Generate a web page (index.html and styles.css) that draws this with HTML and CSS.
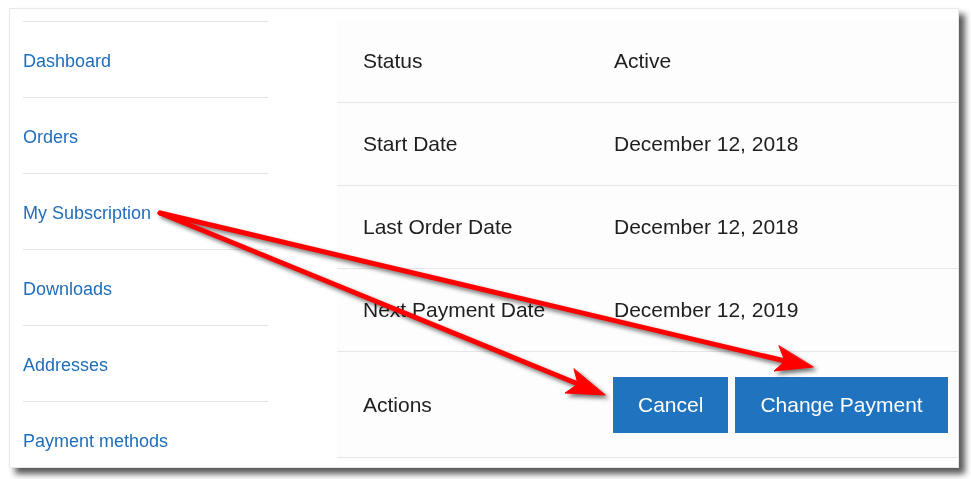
FILE: index.html
```html
<!DOCTYPE html>
<html lang="en">
<head>
  <meta charset="UTF-8" />
  <meta name="viewport" content="width=device-width, initial-scale=1.0"/>
  <title>My Subscription</title>
  <link rel="stylesheet" href="styles.css">
</head>
<body>
  <div class="shot">
    <div class="frame">
      <ul class="account-nav">
        <li><a href="#">Dashboard</a></li>
        <li><a href="#">Orders</a></li>
        <li><a href="#">My Subscription</a></li>
        <li><a href="#">Downloads</a></li>
        <li><a href="#">Addresses</a></li>
        <li><a href="#">Payment methods</a></li>
      </ul>

      <div class="subscription">
        <div class="row">
          <div class="label">Status</div>
          <div class="value">Active</div>
        </div>
        <div class="row">
          <div class="label">Start Date</div>
          <div class="value">December 12, 2018</div>
        </div>
        <div class="row">
          <div class="label">Last Order Date</div>
          <div class="value">December 12, 2018</div>
        </div>
        <div class="row">
          <div class="label">Next Payment Date</div>
          <div class="value">December 12, 2019</div>
        </div>
        <div class="row actions">
          <div class="label">Actions</div>
          <div class="value">
            <a href="#" class="button">Cancel</a>
            <a href="#" class="button">Change Payment</a>
          </div>
        </div>
      </div>
    </div>
  </div>

  <!-- annotation arrows drawn over the screenshot -->
  <svg class="arrows" width="971" height="479" viewBox="0 0 971 479">
    <g fill="#ff0000" stroke="#ff0000" stroke-linecap="round" stroke-linejoin="round">
      <line x1="160" y1="213" x2="578" y2="384" stroke-width="5" />
      <polygon points="605,395 565,393 578,384 574,369" stroke-width="1" />
      <line x1="160" y1="213" x2="785" y2="361" stroke-width="5" />
      <polygon points="813,367 774,371 785,361 779,346" stroke-width="1" />
    </g>
  </svg>
</body>
</html>
```

FILE: styles.css
```css
html, body {
  height: 100%;
}
body {
  margin: 0;
  background: #fff;
  font-family: "Liberation Sans", Arial, sans-serif;
}
/* screenshot frame with its grey drop shadow on the right and bottom */
.shot {
  width: 950px;
  height: 460px;
  margin: 8px 0 0 9px;
  background: #fff;
  filter: drop-shadow(6px 6px 3px rgba(0, 0, 0, 0.65));
}
.frame {
  display: flex;
  align-items: flex-start;
  box-sizing: border-box;
  height: 100%;
  padding-left: 13px;
  background: #fff;
  border: 1px solid #e8e8e8;
  overflow: hidden;
}
.account-nav {
  list-style: none;
  width: 245px;
  margin: 12px 0 0;
  padding: 0;
  flex-shrink: 0;
}
.account-nav li {
  border-top: 1px solid #e2e2e2;
}
.account-nav a {
  display: block;
  height: 75px;
  line-height: 79px;
  font-size: 18px;
  color: #1f6ebb;
  text-decoration: none;
}
.subscription {
  flex: 1;
  margin: 11px 0 0 69px;
  background: #fdfdfe;
  font-size: 21px;
  color: #1e1e1e;
}
.row {
  display: grid;
  grid-template-columns: 251px 1fr;
  align-items: center;
  box-sizing: border-box;
  height: 83px;
  border-bottom: 1px solid #e6e6e6;
}
.row .label,
.row .value {
  padding-left: 26px;
}
.row.actions {
  height: 106px;
}
.row.actions .value {
  display: flex;
  gap: 7px;
  padding-left: 25px;
}
.button {
  display: inline-block;
  height: 56px;
  line-height: 56px;
  padding: 0 25px;
  background: #2073bf;
  color: #fff;
  text-decoration: none;
}
.arrows {
  position: absolute;
  left: 0;
  top: 0;
  pointer-events: none;
  filter: drop-shadow(3px 3px 2px rgba(0, 0, 0, 0.55));
}
```
